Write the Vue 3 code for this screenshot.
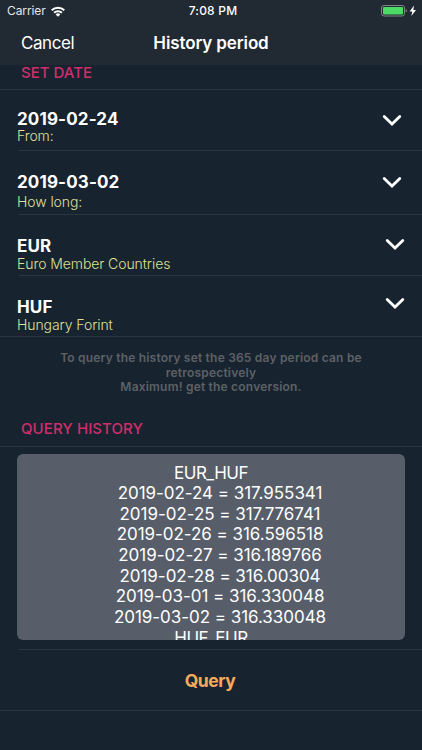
<template>
  <div class="screen">
    <header class="top">
      <div class="status-bar">
        <div class="carrier">
          <span>Carrier</span>
          <svg class="wifi" viewBox="0 0 14 11" width="14" height="11">
            <path d="M0 3.5 A10 10 0 0 1 14 3.5 L12.6 5 A8 8 0 0 0 1.4 5 Z" />
            <path d="M2.4 6 A6.6 6.6 0 0 1 11.6 6 L10.2 7.5 A4.6 4.6 0 0 0 3.8 7.5 Z" />
            <path d="M4.7 8.4 A3.3 3.3 0 0 1 9.3 8.4 L7 10.8 Z" />
          </svg>
        </div>
        <span class="time">7:08 PM</span>
        <div class="battery">
          <svg viewBox="0 0 36 12" width="36" height="12">
            <rect class="shell" x="0.5" y="0.5" width="23" height="10.5" rx="2.5" />
            <rect class="level" x="2" y="2" width="20" height="7.5" rx="1" />
            <path class="cap" d="M24.7 4 Q26 4.6 26 5.8 Q26 7 24.7 7.6 Z" />
            <path class="bolt" d="M33 0.6 L28.6 6.5 H31.3 L30.4 11 L35 5 H32.3 Z" />
          </svg>
        </div>
      </div>
      <nav class="nav-bar">
        <button class="cancel">Cancel</button>
        <h1>History period</h1>
        <span></span>
      </nav>
    </header>

    <h2 class="section-title first"><span>SET DATE</span></h2>

    <div v-for="row in rows" :key="row.id" class="row" :class="row.id">
      <div class="row-text">
        <strong>{{ row.value }}</strong>
        <span>{{ row.label }}</span>
      </div>
      <svg class="chevron" viewBox="0 0 20 13" width="20" height="13">
        <path d="M2.2 2.4 L10 10 L17.8 2.4" />
      </svg>
    </div>

    <p class="hint">
      To query the history set the 365 day period can be<br />
      retrospectively<br />
      Maximum! get the conversion.
    </p>

    <h2 class="section-title second"><span>QUERY HISTORY</span></h2>

    <div class="history">
      <div class="result">
        <div class="pair">EUR_HUF</div>
        <div v-for="rate in rates" :key="rate.date" class="rate">
          {{ rate.date }} = {{ rate.value }}
        </div>
        <div class="pair">HUF_EUR</div>
      </div>
    </div>

    <button class="query"><span>Query</span></button>
  </div>
</template>

<script setup>
import { ref } from 'vue'

const rows = ref([
  { id: 'from', value: '2019-02-24', label: 'From:' },
  { id: 'until', value: '2019-03-02', label: 'How long:' },
  { id: 'base', value: 'EUR', label: 'Euro Member Countries' },
  { id: 'target', value: 'HUF', label: 'Hungary Forint' }
])

const rates = ref([
  { date: '2019-02-24', value: '317.955341' },
  { date: '2019-02-25', value: '317.776741' },
  { date: '2019-02-26', value: '316.596518' },
  { date: '2019-02-27', value: '316.189766' },
  { date: '2019-02-28', value: '316.00304' },
  { date: '2019-03-01', value: '316.330048' },
  { date: '2019-03-02', value: '316.330048' }
])
</script>

<style>
body {
  margin: 0;
  background: #182330;
}
</style>

<style scoped>
.screen {
  width: 100%;
  height: 750px;
  overflow: hidden;
  background: #182330;
  color: #fff;
  font-family: Inter, Roboto, sans-serif;
  box-sizing: border-box;
}

.screen * {
  box-sizing: border-box;
}

button {
  border: none;
  background: none;
  padding: 0;
  font-family: inherit;
  color: #fff;
}

.top {
  height: 65px;
  background: #212932;
}

.status-bar {
  display: grid;
  grid-template-columns: 1fr auto 1fr;
  height: 22px;
  padding: 0 5px 0 7px;
  align-items: center;
  font-size: 12px;
  line-height: 22px;
}

.carrier {
  display: flex;
  align-items: center;
  gap: 5px;
  color: #e4e6e8;
  letter-spacing: -0.1px;
}

.wifi {
  fill: #fff;
}

.time {
  padding-left: 2px;
  font-weight: 500;
  letter-spacing: 0.2px;
}

.battery {
  display: flex;
  justify-content: flex-end;
}

.shell {
  fill: none;
  stroke: #7f858b;
}

.level {
  fill: #4cd964;
}

.cap {
  fill: #7f858b;
}

.bolt {
  fill: #fff;
}

.nav-bar {
  display: grid;
  grid-template-columns: 1fr auto 1fr;
  height: 42px;
  padding: 0 21px;
  align-items: center;
}

.cancel {
  text-align: left;
  font-size: 17px;
  letter-spacing: -0.45px;
}

h1 {
  margin: 0;
  font-size: 17px;
  font-weight: 600;
  letter-spacing: -0.12px;
}

.section-title {
  display: flex;
  margin: 0;
  padding-left: 21px;
  border-bottom: 1px solid #2c3641;
  font-size: 15px;
  font-weight: 500;
  line-height: 18px;
  color: #cf2e6b;
}

.first {
  height: 25px;
  line-height: 15px;
}

.second {
  height: 47px;
  padding-top: 20px;
  letter-spacing: 0.08px;
}

.row {
  display: flex;
  justify-content: space-between;
  padding: 0 20px 0 17px;
  border-bottom: 1px solid;
  border-image: linear-gradient(to right, transparent 20px, #2c3641 20px) 1;
}

.row-text {
  display: flex;
  flex-direction: column;
}

.row strong {
  font-size: 17px;
  font-weight: 700;
  line-height: 20px;
  letter-spacing: 0.14px;
}

.row span {
  font-size: 14px;
  font-weight: 300;
  line-height: 16px;
  letter-spacing: -0.08px;
  color: #dfe096;
}

.chevron {
  fill: none;
  stroke: #fff;
  stroke-width: 2.8;
  stroke-linecap: round;
}

.from {
  height: 61px;
  padding-top: 20px;
}

.from strong {
  line-height: 18px;
}

.from .chevron {
  margin-top: 4px;
}

.until {
  height: 64px;
  padding-top: 21px;
}

.until .row-text {
  gap: 2px;
}

.until .chevron {
  margin-top: 4px;
}

.base {
  height: 61px;
  padding-top: 21px;
  padding-right: 17px;
}

.base .chevron {
  margin-top: 2px;
}

.target {
  height: 61px;
  padding-top: 21px;
  padding-right: 17px;
  border-image: none;
  border-color: #2c3641;
}

.hint {
  height: 63px;
  margin: 0;
  padding-top: 14px;
  text-align: center;
  font-size: 12px;
  font-weight: 600;
  line-height: 14.5px;
  letter-spacing: 0.2px;
  color: #5d6165;
}

.history {
  height: 203px;
  padding: 7px 17px 0;
  border-bottom: 1px solid;
  border-image: linear-gradient(to right, transparent 20px, #2c3641 20px) 1;
}

.result {
  height: 186px;
  padding-top: 8.5px;
  overflow: hidden;
  border-radius: 6px;
  background: #575e69;
  text-align: center;
  font-size: 17px;
  line-height: 20.65px;
}

.pair {
  letter-spacing: -0.5px;
}

.rate {
  padding-left: 18px;
  letter-spacing: -0.04px;
}

.query {
  display: block;
  width: 100%;
  height: 61px;
  padding-right: 2px;
  border-bottom: 1px solid #2c3641;
  font-size: 17.5px;
  font-weight: 700;
  letter-spacing: -0.45px;
  color: #f9aa59;
}
</style>
